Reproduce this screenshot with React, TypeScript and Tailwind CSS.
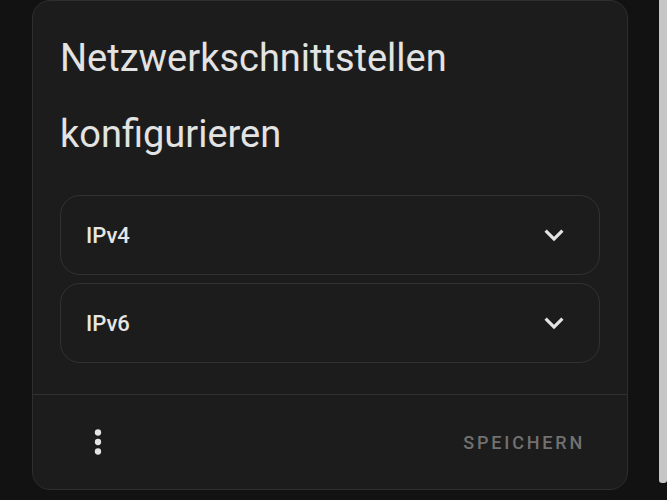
import React from 'react';

const Chevron = () => (
    <svg viewBox="0 0 24 24" className="w-[38px] h-[38px] fill-[#e3e3e3]">
        <path d="M16.59 8.59L12 13.17 7.41 8.59 6 10l6 6 6-6z" />
    </svg>
);

const MoreVert = () => (
    <svg viewBox="0 0 24 24" className="w-[38px] h-[38px] fill-[#e3e3e3]">
        <circle cx="12" cy="6" r="2" />
        <circle cx="12" cy="12" r="2" />
        <circle cx="12" cy="18" r="2" />
    </svg>
);

const Item = ({ label }: { label: string }) => (
    <div className="h-[80px] flex items-center justify-between rounded-[20px] border border-[#323232] pl-[25px] pr-[26px]">
        <span className="text-[22px] font-medium text-[#e6e6e6]">{label}</span>
        <Chevron />
    </div>
);

const App = () => {
    return (
        <div className="relative w-[667px] h-[500px] bg-[#121212] flex pl-8 overflow-hidden" style={{ fontFamily: 'Roboto, "Noto Sans", sans-serif' }}>
            <div className="w-[596px] h-[490px] shrink-0 flex flex-col rounded-[18px] border border-[#2e2e2e] bg-[#1c1c1c]">
                <div className="flex-1 flex flex-col px-[27px] pt-[19px]">
                    <h2 className="text-[38px] leading-[76px] font-normal text-[#e3e3e3]">
                        Netzwerkschnittstellen konfigurieren
                    </h2>
                    <div className="mt-[23px] flex flex-col gap-2">
                        <Item label="IPv4" />
                        <Item label="IPv6" />
                    </div>
                </div>
                <div className="h-[95px] border-t border-[#313131] flex items-center justify-between pl-[46px] pr-[42px]">
                    <MoreVert />
                    <span className="text-[18px] font-medium tracking-[2.8px] text-[#717171]">SPEICHERN</span>
                </div>
            </div>
            {/* scrollbar thumb */}
            <div className="absolute right-0 top-0 w-[8px] h-[483px] bg-[#c6c6c6] rounded-b-[3px]" />
        </div>
    );
}

export default App;
